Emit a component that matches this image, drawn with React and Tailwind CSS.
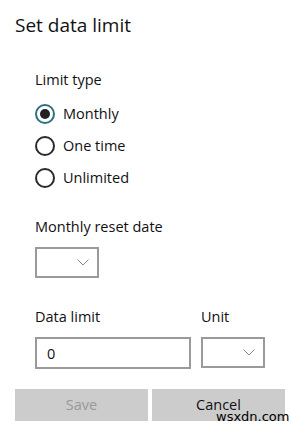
import React, { useState } from "react";

const font = { fontFamily: '"Open Sans", "Noto Sans", sans-serif' };

function Radio({ label, checked, onClick }) {
  return (
    <button onClick={onClick} className="flex h-[20px] items-center text-left">
      <span
        className={`flex h-[20px] w-[20px] items-center justify-center rounded-full border-2 ${checked ? "border-[#2f6f82]" : "border-[#2b2b2b]"}`}
      >
        {checked && <span className="h-[10px] w-[10px] rounded-full bg-[#222]" />}
      </span>
      <span className="ml-[8px] text-[14.5px] leading-[20px] text-[#111]">{label}</span>
    </button>
  );
}

function Chevron() {
  return (
    <svg width="12" height="7" viewBox="0 0 12 7" fill="none">
      <path d="M0.5 0.5 L6 6 L11.5 0.5" stroke="#8a8a8a" strokeWidth="1" />
    </svg>
  );
}

function Dropdown() {
  return (
    <div className="flex h-[31px] w-[64px] items-center justify-end border-2 border-[#9a9a9a] pr-[8px]">
      <Chevron />
    </div>
  );
}

export default function App() {
  const [type, setType] = useState("Monthly");
  const [limit, setLimit] = useState("0");

  return (
    <div className="relative h-[430px] w-[291px] bg-white text-[#111]" style={font}>
      <div className="pl-[15px] pr-[6px] pt-[12px]">
        <h1 className="text-[19px] leading-[26px] font-normal">Set data limit</h1>

        <div className="pl-[20px]">
          <div className="mt-[32px] text-[14.5px] leading-[20px]">Limit type</div>
          <div className="mt-[14px] flex flex-col gap-[12px]">
            {["Monthly", "One time", "Unlimited"].map((t) => (
              <Radio key={t} label={t} checked={type === t} onClick={() => setType(t)} />
            ))}
          </div>

          <div className="mt-[29px] text-[14.5px] leading-[20px]">Monthly reset date</div>
          <div className="mt-[10px]">
            <Dropdown />
          </div>

          <div className="mt-[29px] flex gap-[10px]">
            <div className="w-[156px]">
              <div className="text-[14.5px] leading-[20px]">Data limit</div>
              <input
                value={limit}
                onChange={(e) => setLimit(e.target.value)}
                className="mt-[10px] h-[32px] w-[156px] border-2 border-[#9a9a9a] px-[10px] text-[14.5px] outline-none"
              />
            </div>
            <div>
              <div className="text-[14.5px] leading-[20px]">Unit</div>
              <div className="mt-[10px]">
                <Dropdown />
              </div>
            </div>
          </div>
        </div>

        <div className="mt-[20px] flex gap-[4px]">
          <button className="h-[32px] flex-1 bg-[#cccccc] text-[14.5px] text-[#999]">Save</button>
          <button className="h-[32px] flex-1 bg-[#cccccc] text-[14.5px] text-[#111]">Cancel</button>
        </div>
      </div>

      <div
        className="absolute left-[216px] top-[409px] text-[13px] leading-[16px] text-black"
        style={{ fontFamily: '"DejaVu Sans", sans-serif' }}
      >
        wsxdn.com
      </div>
    </div>
  );
}
